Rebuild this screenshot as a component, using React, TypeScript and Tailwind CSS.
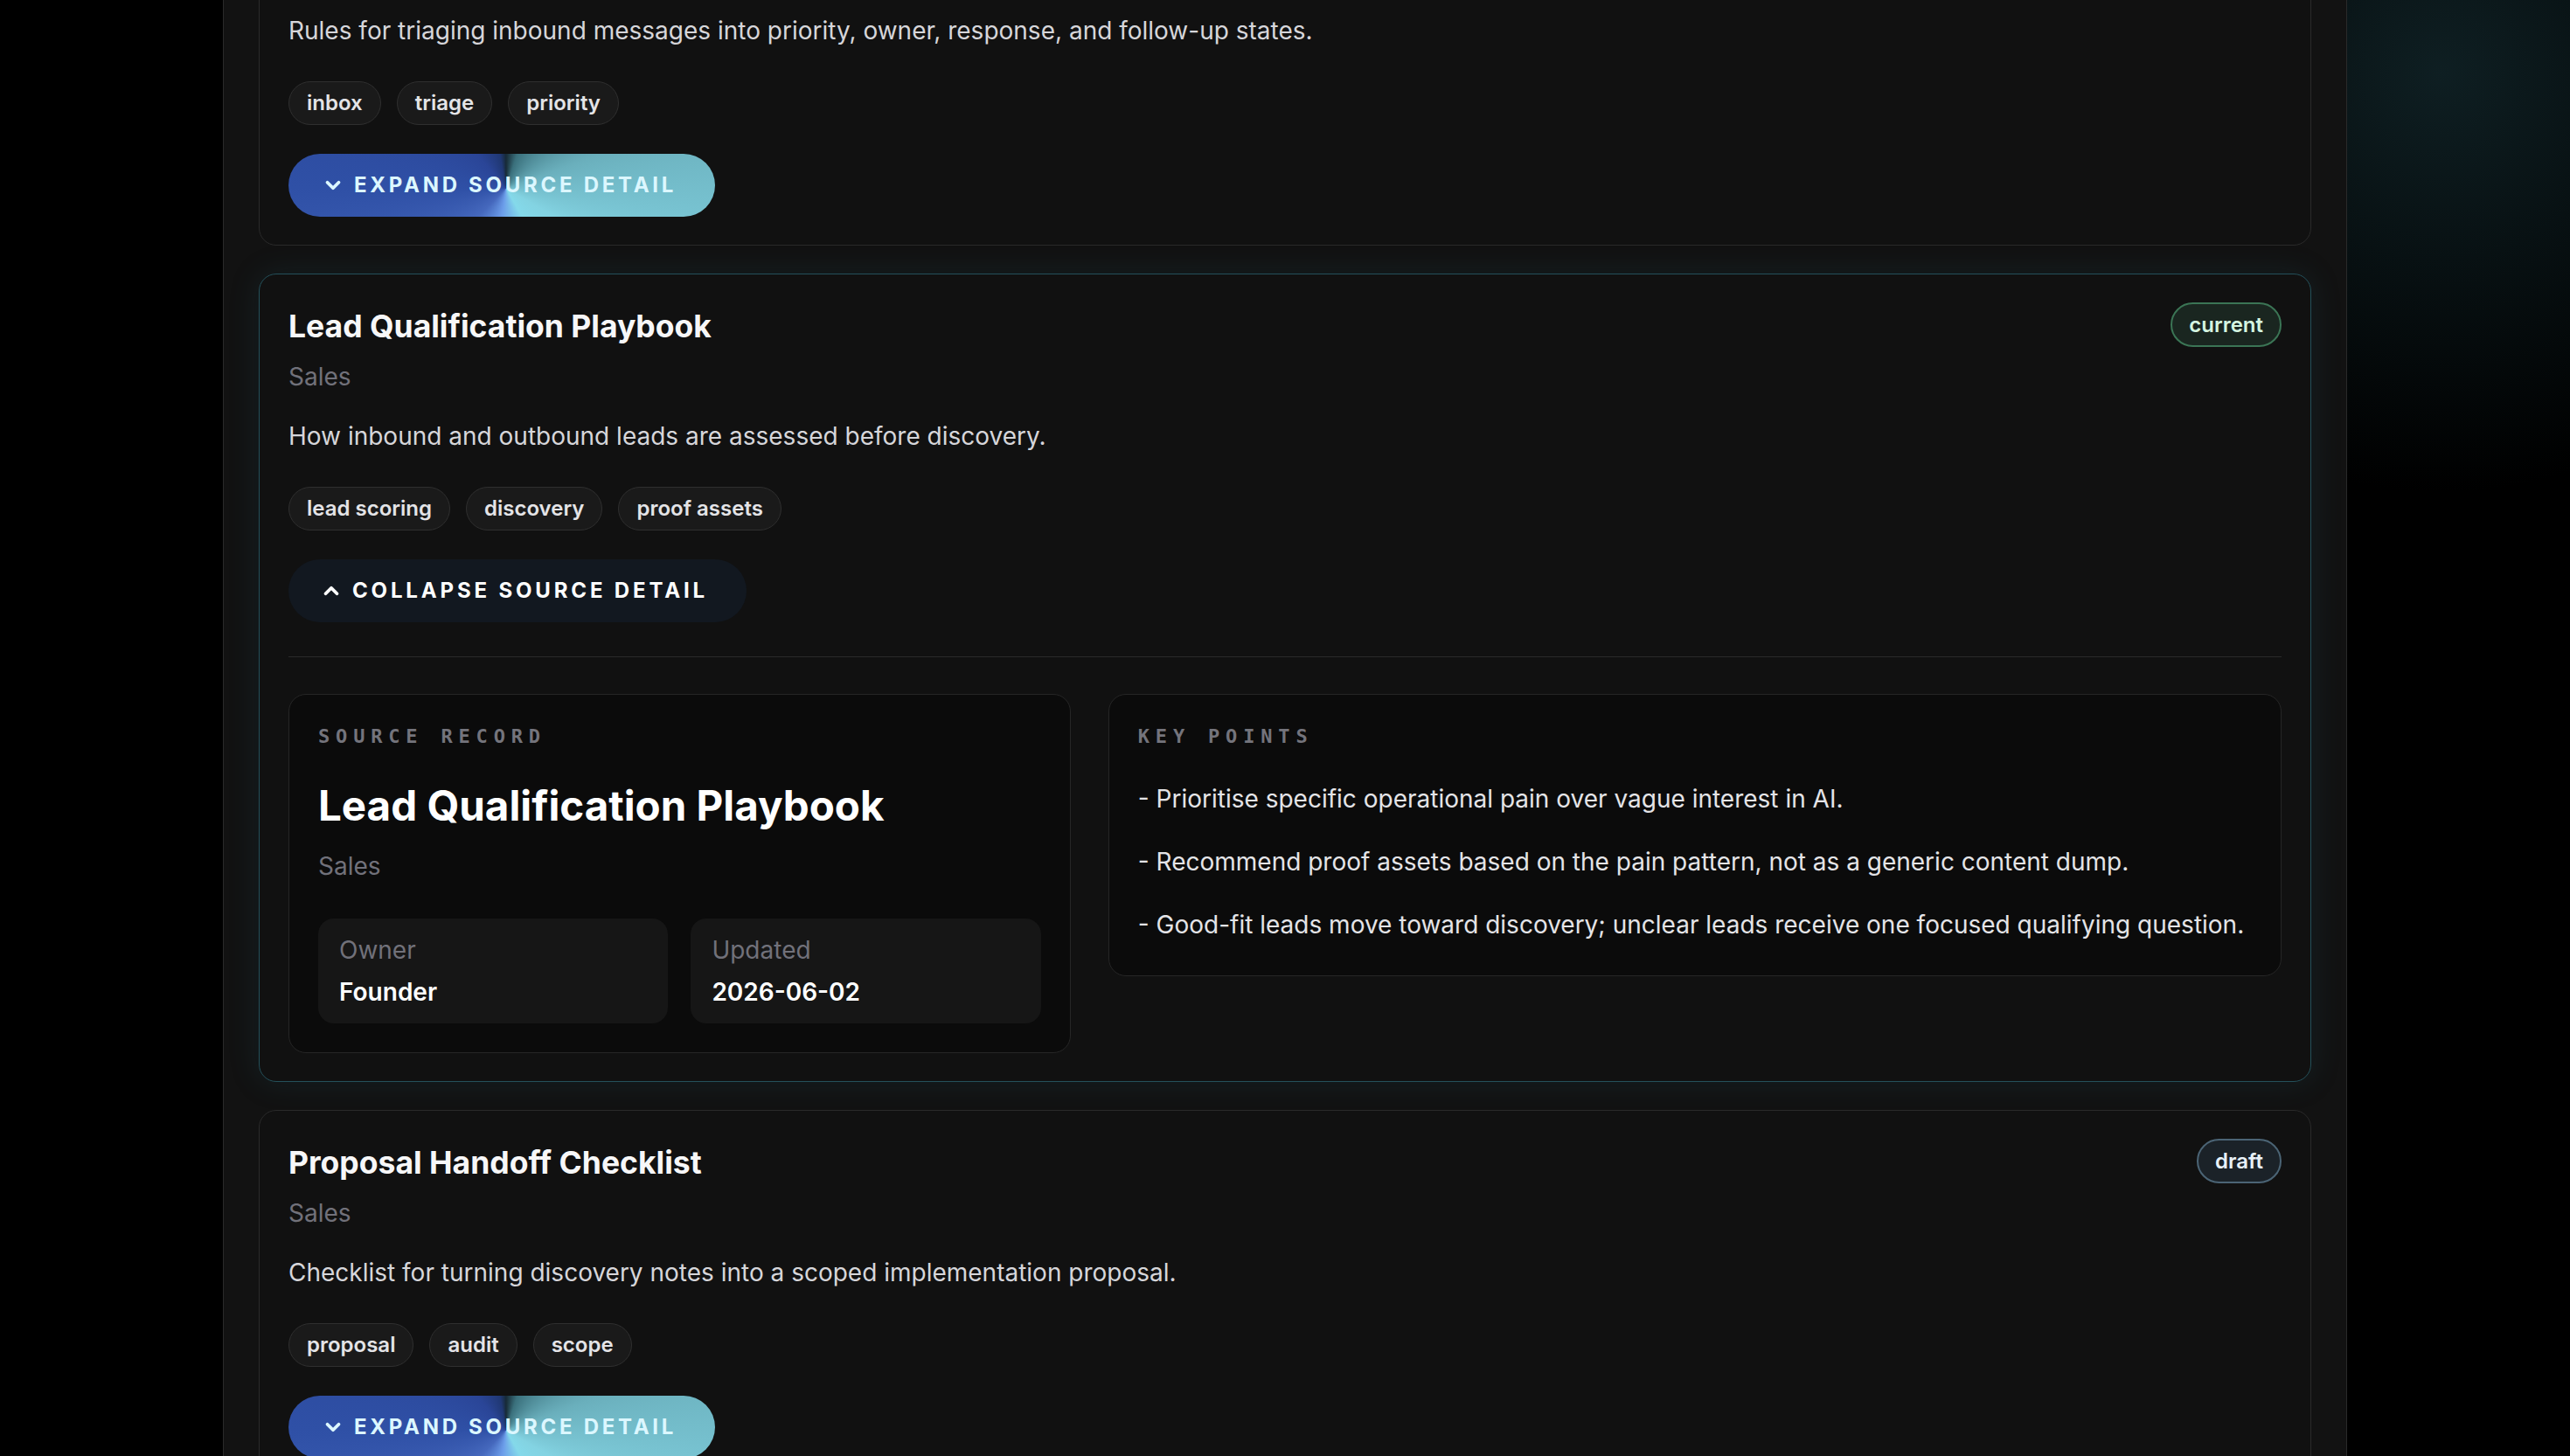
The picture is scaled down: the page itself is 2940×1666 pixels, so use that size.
import React from 'react';
import { ChevronDown, ChevronUp } from 'lucide-react';

interface SourceDoc {
  title: string;
  area: string;
  status: 'current' | 'draft';
  summary: string;
  tags: string[];
  owner: string;
  updated: string;
  points: string[];
  open?: boolean;
}

const docs: SourceDoc[] = [
  {
    title: 'Inbound Triage Rules',
    area: 'Operations',
    status: 'current',
    summary: 'Rules for triaging inbound messages into priority, owner, response, and follow-up states.',
    tags: ['inbox', 'triage', 'priority'],
    owner: 'Founder',
    updated: '2026-05-28',
    points: [],
  },
  {
    title: 'Lead Qualification Playbook',
    area: 'Sales',
    status: 'current',
    summary: 'How inbound and outbound leads are assessed before discovery.',
    tags: ['lead scoring', 'discovery', 'proof assets'],
    owner: 'Founder',
    updated: '2026-06-02',
    points: [
      '- Prioritise specific operational pain over vague interest in AI.',
      '- Recommend proof assets based on the pain pattern, not as a generic content dump.',
      '- Good-fit leads move toward discovery; unclear leads receive one focused qualifying question.',
    ],
    open: true,
  },
  {
    title: 'Proposal Handoff Checklist',
    area: 'Sales',
    status: 'draft',
    summary: 'Checklist for turning discovery notes into a scoped implementation proposal.',
    tags: ['proposal', 'audit', 'scope'],
    owner: 'Founder',
    updated: '2026-06-04',
    points: [],
  },
];

function StatusBadge({ status }: { status: SourceDoc['status'] }) {
  const tone =
    status === 'current'
      ? 'border-[#3b7555] bg-[#1a2620] text-[#d5f5e0]'
      : 'border-[#4b6475] bg-[#1b2228] text-[#e8f1f8]';
  return (
    <span className={`shrink-0 rounded-full border-2 px-[19px] text-[24px] font-semibold leading-[47px] ${tone}`}>
      {status}
    </span>
  );
}

function SourceCard({ doc }: { doc: SourceDoc }) {
  return (
    <article
      className={`rounded-[20px] border bg-[#111111] px-[33px] pt-[32px] pb-[32px] ${
        doc.open
          ? 'border-[#24505a] shadow-[0_0_36px_rgba(40,105,125,0.16)]'
          : 'border-[#2a2a2a]'
      }`}
    >
      <div className="flex items-start justify-between gap-6">
        <h2 className="text-[35.5px] font-bold leading-[56px] text-[#f7f7f8]">{doc.title}</h2>
        <StatusBadge status={doc.status} />
      </div>
      <p className="mt-[8px] text-[28px] leading-[42px] text-[#71717a]">{doc.area}</p>
      <p className="mt-[26px] text-[28px] leading-[42px] text-[#d6d6da]">{doc.summary}</p>

      <div className="mt-[37px] flex flex-wrap gap-[18px]">
        {doc.tags.map((tag) => (
          <span
            key={tag}
            className="rounded-full border border-[#2f2f2f] bg-[#1a1a1a] px-[20px] py-[8px] text-[24px] font-semibold leading-[32px] text-[#e4e4e7]"
          >
            {tag}
          </span>
        ))}
      </div>

      {doc.open ? (
        <button className="mt-[33px] flex h-[72px] items-center gap-[11px] rounded-full bg-[#121820] pl-[36px] pr-[44px] text-[24px] font-bold uppercase tracking-[0.16em] text-white">
          <ChevronUp size={26} strokeWidth={3.5} />
          Collapse source detail
        </button>
      ) : (
        <button className="mt-[33px] flex h-[72px] items-center gap-[11px] rounded-full bg-[image:conic-gradient(from_0deg_at_51%_55%,#172a36_0deg,#3a707c_18deg,#6aafbc_70deg,#83d3e2_120deg,#84d9ea_150deg,#6c9eea_188deg,#4568bd_225deg,#2f50a6_270deg,#2a4597_320deg,#203874_350deg,#172a36_360deg)] pl-[38px] pr-[44px] text-[24px] font-bold uppercase tracking-[0.155em] text-[#dcf7ff]">
          <ChevronDown size={26} strokeWidth={3.5} />
          Expand source detail
        </button>
      )}

      {doc.open && (
        <>
          <div className="mt-[39px] h-px bg-[#2a2a2a]" />
          <div className="mt-[42px] grid grid-cols-[2fr_3fr] items-start gap-[43px]">
            <section className="rounded-[20px] border border-[#262626] bg-[#0b0b0b] px-[33px] pt-[31px] pb-[33px]">
              <p className="font-['DejaVu_Sans_Mono',monospace] text-[22px] font-bold uppercase leading-[33px] tracking-[0.31em] text-[#74747c]">
                Source record
              </p>
              <h3 className="mt-[35px] text-[47.5px] font-bold leading-[56px] text-white">{doc.title}</h3>
              <p className="mt-[20px] text-[28px] leading-[42px] text-[#71717a]">{doc.area}</p>
              <div className="mt-[39px] grid grid-cols-2 gap-[26px]">
                <div className="rounded-[18px] bg-[#161616] px-[24px] pt-[15px] pb-[15px]">
                  <p className="text-[28px] leading-[42px] text-[#71717a]">Owner</p>
                  <p className="mt-[6px] text-[28px] font-semibold leading-[42px] text-white">{doc.owner}</p>
                </div>
                <div className="rounded-[18px] bg-[#161616] px-[24px] pt-[15px] pb-[15px]">
                  <p className="text-[28px] leading-[42px] text-[#71717a]">Updated</p>
                  <p className="mt-[6px] text-[28px] font-semibold leading-[42px] text-white">{doc.updated}</p>
                </div>
              </div>
            </section>

            <section className="rounded-[20px] border border-[#262626] bg-[#0b0b0b] px-[33px] pt-[31px] pb-[34px]">
              <p className="font-['DejaVu_Sans_Mono',monospace] text-[22px] font-bold uppercase leading-[33px] tracking-[0.31em] text-[#74747c]">
                Key points
              </p>
              <ul className="mt-[31px] flex flex-col gap-[24px]">
                {doc.points.map((point) => (
                  <li key={point} className="text-[28px] leading-[48px] text-[#e4e4e7]">
                    {point}
                  </li>
                ))}
              </ul>
            </section>
          </div>
        </>
      )}
    </article>
  );
}

export default function App() {
  return (
    <div className="h-[1666px] overflow-hidden bg-black bg-[image:radial-gradient(circle_480px_at_95%_5%,rgba(16,34,38,0.9),transparent)] font-['Inter',sans-serif] antialiased">
      <main className="mx-auto flex h-full w-[2430px] flex-col border-x border-[#2a2a2a] bg-[#121212] px-[40px]">
        <div className="-mt-[151px] flex flex-col gap-[32px]">
          {docs.map((doc) => (
            <SourceCard key={doc.title} doc={doc} />
          ))}
        </div>
      </main>
    </div>
  );
}
